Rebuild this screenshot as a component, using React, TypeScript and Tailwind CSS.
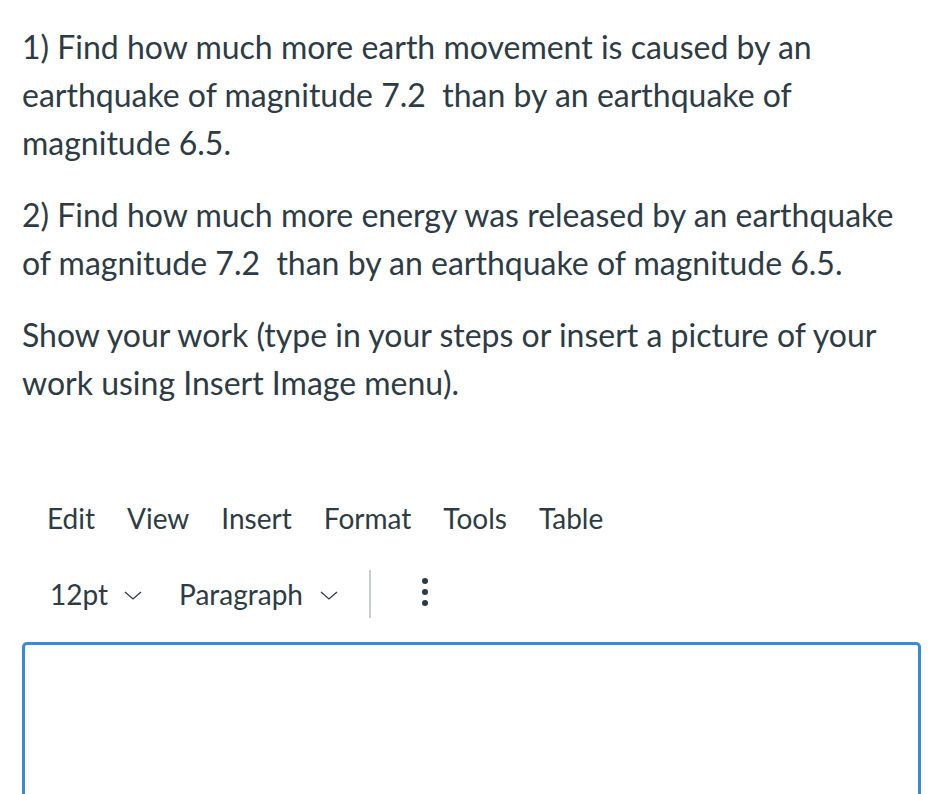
import React from "react";

function Chevron() {
  return (
    <svg width="20" height="10" viewBox="0 0 20 10" className="mt-[1px]">
      <path d="M2 2 L10 9 L18 2" fill="none" stroke="#2d3b45" strokeWidth="1.3" />
    </svg>
  );
}

export default function App() {
  return (
    <div
      className="w-[948px] h-[794px] overflow-hidden bg-white text-[#2d3b45]"
      style={{ fontFamily: "Lato, 'Open Sans', sans-serif" }}
    >
      <div className="pl-[22px] pr-[22px] pt-[23px] text-[32px] leading-[48px]">
        <p>
          1) Find how much more earth movement is caused by an
          <br />
          earthquake of magnitude 7.2&nbsp; than by an earthquake of
          <br />
          magnitude 6.5.
        </p>
        <p className="mt-[24px]">
          2) Find how much more energy was released by an earthquake
          <br />
          of magnitude 7.2&nbsp; than by an earthquake of magnitude 6.5.
        </p>
        <p className="mt-[24px]">
          Show your work (type in your steps or insert a picture of your
          <br />
          work using Insert Image menu).
        </p>
      </div>

      <div className="mt-[91px] flex items-center pl-[47px] text-[28px] h-[40px] gap-[32px]">
        <span>Edit</span>
        <span>View</span>
        <span>Insert</span>
        <span>Format</span>
        <span>Tools</span>
        <span>Table</span>
      </div>

      <div className="mt-[32px] flex items-center pl-[50px] h-[48px] text-[28px]">
        <span>12pt</span>
        <span className="ml-[15px] flex items-center">
          <Chevron />
        </span>
        <span className="ml-[36px]">Paragraph</span>
        <span className="ml-[16px] flex items-center">
          <Chevron />
        </span>
        <div className="ml-[30px] w-[2px] h-[48px] bg-[#c7cdd1]" />
        <div className="ml-[51px] mb-[4px] flex flex-col gap-[5px]">
          <div className="w-[6px] h-[6px] rounded-full bg-[#2d3b45]" />
          <div className="w-[6px] h-[6px] rounded-full bg-[#2d3b45]" />
          <div className="w-[6px] h-[6px] rounded-full bg-[#2d3b45]" />
        </div>
      </div>

      <div className="mt-[24px] ml-[22px] w-[899px] h-[200px] border-[3px] border-[#3b8ad8] rounded-t-[5px]" />
    </div>
  );
}
